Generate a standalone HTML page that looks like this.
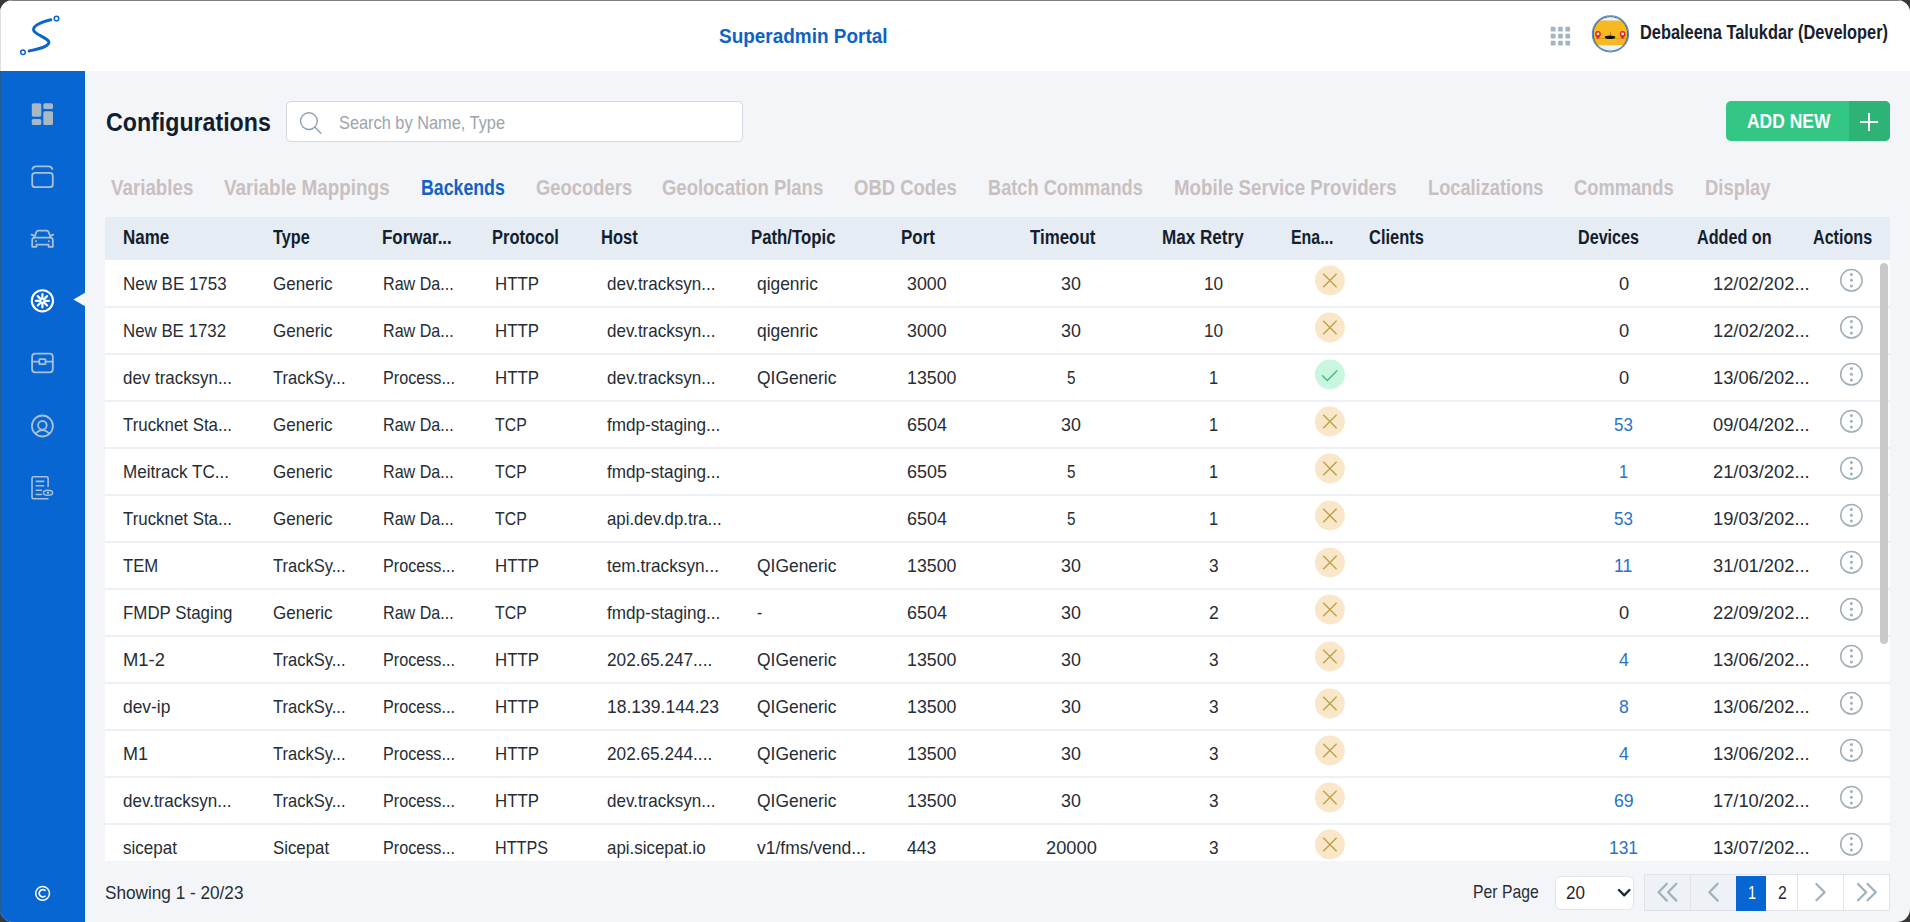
<!DOCTYPE html>
<html><head><meta charset="utf-8"><style>
html,body{margin:0;padding:0;width:1910px;height:922px;overflow:hidden;background:#383838}
#app{position:absolute;left:0;top:0;width:1910px;height:922px;border-radius:13px;overflow:hidden;background:#F4F5F9}
.t{position:absolute;white-space:nowrap;font-family:"Liberation Sans",sans-serif;transform-origin:0 0}
svg{overflow:visible}
</style></head><body><div id="app">
<div style="position:absolute;left:0px;top:0px;width:1910px;height:71px;background:#fff"></div>
<div style="position:absolute;left:0px;top:71px;width:85px;height:851px;background:#0766D1"></div>
<div style="position:absolute;left:0px;top:0px;width:1910px;height:1px;background:#808080"></div>
<div style="position:absolute;left:0px;top:1px;width:1px;height:70px;background:#DEDEDE"></div>
<div style="position:absolute;left:0px;top:71px;width:1px;height:851px;background:#225C94"></div>
<svg style="position:absolute;left:0px;top:0px;" width="80" height="70" viewBox="0 0 80 70"><g fill="none" stroke="#0A66CC" stroke-linecap="round">
<path d="M29.2 51 C38 49, 47 47.5, 48.8 43 C50.5 38.5, 34.5 35, 33.6 30 C32.8 24.5, 44 21.5, 50.8 19.8" stroke-width="3"/>
<circle cx="56.5" cy="18.6" r="2.3" stroke-width="1.5"/>
<circle cx="23" cy="52.2" r="2.3" stroke-width="1.5"/>
</g></svg>
<div class="t" style="left:718.50px;top:26.07px;font-size:20px;line-height:20px;font-weight:bold;color:#0C63C5;transform:scaleX(0.9477);">Superadmin Portal</div>
<svg style="position:absolute;left:0px;top:0px;pointer-events:none" width="1910" height="71" viewBox="0 0 1910 71"><g fill="#A3B4C4"><rect x="1550.8" y="26.80" width="4.7" height="4.7" rx="0.6"/><rect x="1550.8" y="33.75" width="4.7" height="4.7" rx="0.6"/><rect x="1550.8" y="40.70" width="4.7" height="4.7" rx="0.6"/><rect x="1558.1" y="26.80" width="4.7" height="4.7" rx="0.6"/><rect x="1558.1" y="33.75" width="4.7" height="4.7" rx="0.6"/><rect x="1558.1" y="40.70" width="4.7" height="4.7" rx="0.6"/><rect x="1565.4" y="26.80" width="4.7" height="4.7" rx="0.6"/><rect x="1565.4" y="33.75" width="4.7" height="4.7" rx="0.6"/><rect x="1565.4" y="40.70" width="4.7" height="4.7" rx="0.6"/></g></svg>
<svg style="position:absolute;left:1588px;top:11px;" width="45" height="45" viewBox="0 0 45 45"><defs><clipPath id="av"><circle cx="22.45" cy="22.9" r="17.6"/></clipPath></defs>
<circle cx="22.45" cy="22.9" r="17.6" fill="#E6F2FC"/>
<g clip-path="url(#av)">
<rect x="0" y="9.5" width="45" height="24.7" fill="#F8B822"/>
<rect x="0" y="26.9" width="45" height="1" fill="#D89B18"/>
<ellipse cx="22" cy="26.2" rx="5.3" ry="1.8" fill="#111"/>
<rect x="22" y="21" width="0.7" height="3.5" fill="#8a6a20"/>
<path d="M10 28.2 C8.3 25.8 7.1 24.6 7.1 22.9 A2.9 2.9 0 0 1 12.9 22.9 C12.9 24.6 11.7 25.8 10 28.2Z" fill="#E3261F"/>
<circle cx="10" cy="22.9" r="1.4" fill="#fff"/>
<path d="M34.65 28.2 C32.95 25.8 31.75 24.6 31.75 22.9 A2.9 2.9 0 0 1 37.55 22.9 C37.55 24.6 36.35 25.8 34.65 28.2Z" fill="#E3261F"/>
<circle cx="34.65" cy="22.9" r="1.4" fill="#fff"/>
</g>
<circle cx="22.45" cy="22.9" r="17.3" fill="none" stroke="#3F4A55" stroke-width="0.9"/>
<circle cx="22.45" cy="22.9" r="18.1" fill="none" stroke="#4F8FDA" stroke-width="1.1"/></svg>
<div class="t" style="left:1640.00px;top:23.49px;font-size:19.5px;line-height:19.5px;font-weight:bold;color:#16202F;transform:scaleX(0.8393);">Debaleena Talukdar (Developer)</div>
<svg style="position:absolute;left:0px;top:71px;" width="85" height="851" viewBox="0 0 85 851">
<g fill="#A8B8C5">
<rect x="31.8" y="32.2" width="9.5" height="13.5" rx="1.6"/>
<rect x="43.3" y="32.2" width="9.7" height="5.8" rx="1.6"/>
<rect x="31.8" y="47.9" width="9.5" height="6.1" rx="1.6"/>
<rect x="43.3" y="40.3" width="9.7" height="13.7" rx="1.6"/>
</g>
<g fill="none" stroke="#A9C0D8" stroke-width="1.8" stroke-linecap="round" stroke-linejoin="round">
<path d="M32.4 98 Q33 95.3 36 95.3 H48.6 Q51.6 95.3 52.3 98"/>
<rect x="32.2" y="101.9" width="20.6" height="14.3" rx="3"/>
<path d="M32.2 175.8 V169 Q32.2 166.8 34.2 166.6 L36.6 160.6 Q37.2 159.6 38.4 159.6 H46.6 Q47.8 159.6 48.4 160.6 L50.8 166.6 Q52.8 166.8 52.8 169 V175.8 H48.6 V173.6 H36.4 V175.8 Z"/>
<path d="M34.2 166.6 H50.8 M31.6 163.6 L33.8 164.6 M53.2 163.6 L51 164.6"/>
<rect x="32.1" y="282.7" width="20.7" height="18.6" rx="3"/>
<path d="M32.1 290.7 H39.2 M45.6 290.7 H52.8"/>
<rect x="39.3" y="288.2" width="6.2" height="5" rx="0.6"/>
<circle cx="42.4" cy="355" r="10.5"/>
<circle cx="42.4" cy="354.3" r="4.3"/>
<path d="M35.6 362.3 Q42.4 355.8 49.3 362.3"/>
</g>
<g fill="#A9C0D8"><circle cx="36" cy="170.2" r="1"/><circle cx="48.8" cy="170.2" r="1"/></g>
<g fill="none" stroke="#A9C0D8" stroke-width="1.6" stroke-linecap="round">
<path d="M48.1 415.5 V407.3 Q48.1 405.8 46.6 405.8 H33.5 Q32 405.8 32 407.3 V426.2 Q32 427.7 33.5 427.7 H48"/>
<path d="M36.3 410.4 H43.7 M36.3 414.8 H43.7 M36.3 419.3 H41.4 M36.3 423.5 H41.4"/>
<ellipse cx="48" cy="421.7" rx="4.6" ry="2.5" stroke-width="1.4"/>
</g>
<circle cx="48" cy="421.7" r="1.2" fill="#A9C0D8"/>
<g stroke="#fff" fill="none">
<circle cx="42.4" cy="229.8" r="10.6" stroke-width="2.1"/>
</g>
<g stroke="#fff" stroke-width="2.2" stroke-linecap="round">
<line x1="44.80" y1="229.80" x2="49.00" y2="229.80"/><line x1="44.10" y1="231.50" x2="47.07" y2="234.47"/><line x1="42.40" y1="232.20" x2="42.40" y2="236.40"/><line x1="40.70" y1="231.50" x2="37.73" y2="234.47"/><line x1="40.00" y1="229.80" x2="35.80" y2="229.80"/><line x1="40.70" y1="228.10" x2="37.73" y2="225.13"/><line x1="42.40" y1="227.40" x2="42.40" y2="223.20"/><line x1="44.10" y1="228.10" x2="47.07" y2="225.13"/>
</g>
<circle cx="42.4" cy="229.8" r="2.6" fill="#fff"/><circle cx="42.4" cy="229.8" r="1.0" fill="#0766D1"/>
<polygon points="73.4,228.5 85.5,221.4 85.5,235.6" fill="#F4F5F9"/>
<g fill="none" stroke="#fff" stroke-width="1.5">
<circle cx="42.6" cy="822.3" r="6.9"/>
<path d="M45.6 819.8 A3.7 3.7 0 1 0 45.6 824.8" stroke-width="1.7"/>
</g>
</svg>
<div class="t" style="left:105.80px;top:109.81px;font-size:25.5px;line-height:25.5px;font-weight:bold;color:#121D2D;transform:scaleX(0.9090);">Configurations</div>
<div style="position:absolute;left:286px;top:101px;width:457px;height:41px;background:#fff;border:1px solid #CFD8E1;border-radius:5px;box-sizing:border-box"></div>
<svg style="position:absolute;left:280px;top:95px;" width="60" height="50" viewBox="0 0 60 50"><g fill="none" stroke="#8FA3AE" stroke-width="1.4" stroke-linecap="round"><circle cx="28.9" cy="26.1" r="8.4"/><path d="M35 32.3 L40.8 38.3"/></g></svg>
<div class="t" style="left:339.00px;top:113.64px;font-size:18.5px;line-height:18.5px;color:#9BA4AD;transform:scaleX(0.8837);">Search by Name, Type</div>
<div style="position:absolute;left:1726px;top:101px;width:164px;height:40px;background:#33C684;border-radius:5px"></div>
<div style="position:absolute;left:1849px;top:101px;width:41px;height:40px;background:#2DB376;border-radius:0 5px 5px 0"></div>
<div class="t" style="left:1746.90px;top:111.89px;font-size:19.5px;line-height:19.5px;font-weight:bold;color:#FFFFFF;transform:scaleX(0.8953);">ADD NEW</div>
<div style="position:absolute;left:1860px;top:121px;width:18px;height:2px;background:#fff"></div>
<div style="position:absolute;left:1868px;top:113px;width:2px;height:18px;background:#fff"></div>
<div class="t" style="left:110.60px;top:176.98px;font-size:22px;line-height:22px;font-weight:bold;color:#C8C0C0;transform:scaleX(0.8526);">Variables</div>
<div class="t" style="left:224.30px;top:176.98px;font-size:22px;line-height:22px;font-weight:bold;color:#C8C0C0;transform:scaleX(0.8574);">Variable Mappings</div>
<div class="t" style="left:421.40px;top:176.98px;font-size:22px;line-height:22px;font-weight:bold;color:#1162C4;transform:scaleX(0.8062);">Backends</div>
<div class="t" style="left:535.70px;top:176.98px;font-size:22px;line-height:22px;font-weight:bold;color:#C8C0C0;transform:scaleX(0.8369);">Geocoders</div>
<div class="t" style="left:662.30px;top:176.98px;font-size:22px;line-height:22px;font-weight:bold;color:#C8C0C0;transform:scaleX(0.8398);">Geolocation Plans</div>
<div class="t" style="left:854.00px;top:176.98px;font-size:22px;line-height:22px;font-weight:bold;color:#C8C0C0;transform:scaleX(0.8401);">OBD Codes</div>
<div class="t" style="left:987.90px;top:176.98px;font-size:22px;line-height:22px;font-weight:bold;color:#C8C0C0;transform:scaleX(0.8276);">Batch Commands</div>
<div class="t" style="left:1174.20px;top:176.98px;font-size:22px;line-height:22px;font-weight:bold;color:#C8C0C0;transform:scaleX(0.8511);">Mobile Service Providers</div>
<div class="t" style="left:1428.00px;top:176.98px;font-size:22px;line-height:22px;font-weight:bold;color:#C8C0C0;transform:scaleX(0.8281);">Localizations</div>
<div class="t" style="left:1574.10px;top:176.98px;font-size:22px;line-height:22px;font-weight:bold;color:#C8C0C0;transform:scaleX(0.8314);">Commands</div>
<div class="t" style="left:1705.00px;top:176.98px;font-size:22px;line-height:22px;font-weight:bold;color:#C8C0C0;transform:scaleX(0.8383);">Display</div>
<div style="position:absolute;left:105px;top:217px;width:1785px;height:43px;background:#E5ECF4"></div>
<div style="position:absolute;left:105px;top:260px;width:1785px;height:601px;background:#fff"></div>
<div style="position:absolute;left:105px;top:306px;width:1785px;height:2px;background:#EDF0F5"></div>
<div style="position:absolute;left:105px;top:353px;width:1785px;height:2px;background:#EDF0F5"></div>
<div style="position:absolute;left:105px;top:400px;width:1785px;height:2px;background:#EDF0F5"></div>
<div style="position:absolute;left:105px;top:447px;width:1785px;height:2px;background:#EDF0F5"></div>
<div style="position:absolute;left:105px;top:494px;width:1785px;height:2px;background:#EDF0F5"></div>
<div style="position:absolute;left:105px;top:541px;width:1785px;height:2px;background:#EDF0F5"></div>
<div style="position:absolute;left:105px;top:588px;width:1785px;height:2px;background:#EDF0F5"></div>
<div style="position:absolute;left:105px;top:635px;width:1785px;height:2px;background:#EDF0F5"></div>
<div style="position:absolute;left:105px;top:682px;width:1785px;height:2px;background:#EDF0F5"></div>
<div style="position:absolute;left:105px;top:729px;width:1785px;height:2px;background:#EDF0F5"></div>
<div style="position:absolute;left:105px;top:776px;width:1785px;height:2px;background:#EDF0F5"></div>
<div style="position:absolute;left:105px;top:823px;width:1785px;height:2px;background:#EDF0F5"></div>
<div class="t" style="left:122.90px;top:227.07px;font-size:20px;line-height:20px;font-weight:bold;color:#141E2E;transform:scaleX(0.8485);">Name</div>
<div class="t" style="left:272.80px;top:227.07px;font-size:20px;line-height:20px;font-weight:bold;color:#141E2E;transform:scaleX(0.8119);">Type</div>
<div class="t" style="left:382.10px;top:227.07px;font-size:20px;line-height:20px;font-weight:bold;color:#141E2E;transform:scaleX(0.8486);">Forwar...</div>
<div class="t" style="left:491.80px;top:227.07px;font-size:20px;line-height:20px;font-weight:bold;color:#141E2E;transform:scaleX(0.8249);">Protocol</div>
<div class="t" style="left:601.10px;top:227.07px;font-size:20px;line-height:20px;font-weight:bold;color:#141E2E;transform:scaleX(0.8279);">Host</div>
<div class="t" style="left:751.20px;top:227.07px;font-size:20px;line-height:20px;font-weight:bold;color:#141E2E;transform:scaleX(0.8387);">Path/Topic</div>
<div class="t" style="left:901.00px;top:227.07px;font-size:20px;line-height:20px;font-weight:bold;color:#141E2E;transform:scaleX(0.8500);">Port</div>
<div class="t" style="left:1029.90px;top:227.07px;font-size:20px;line-height:20px;font-weight:bold;color:#141E2E;transform:scaleX(0.8437);">Timeout</div>
<div class="t" style="left:1161.80px;top:227.07px;font-size:20px;line-height:20px;font-weight:bold;color:#141E2E;transform:scaleX(0.8546);">Max Retry</div>
<div class="t" style="left:1290.60px;top:227.07px;font-size:20px;line-height:20px;font-weight:bold;color:#141E2E;transform:scaleX(0.7948);">Ena...</div>
<div class="t" style="left:1369.20px;top:227.07px;font-size:20px;line-height:20px;font-weight:bold;color:#141E2E;transform:scaleX(0.8231);">Clients</div>
<div class="t" style="left:1578.40px;top:227.07px;font-size:20px;line-height:20px;font-weight:bold;color:#141E2E;transform:scaleX(0.8069);">Devices</div>
<div class="t" style="left:1696.80px;top:227.07px;font-size:20px;line-height:20px;font-weight:bold;color:#141E2E;transform:scaleX(0.8080);">Added on</div>
<div class="t" style="left:1813.10px;top:227.07px;font-size:20px;line-height:20px;font-weight:bold;color:#141E2E;transform:scaleX(0.8057);">Actions</div>
<div class="t" style="left:122.80px;top:274.94px;font-size:18.5px;line-height:18.5px;color:#262D35;transform:scaleX(0.9160);">New BE 1753</div>
<div class="t" style="left:273.10px;top:274.94px;font-size:18.5px;line-height:18.5px;color:#262D35;transform:scaleX(0.9198);">Generic</div>
<div class="t" style="left:383.30px;top:274.94px;font-size:18.5px;line-height:18.5px;color:#262D35;transform:scaleX(0.8707);">Raw Da...</div>
<div class="t" style="left:494.80px;top:274.94px;font-size:18.5px;line-height:18.5px;color:#262D35;transform:scaleX(0.9110);">HTTP</div>
<div class="t" style="left:606.50px;top:274.94px;font-size:18.5px;line-height:18.5px;color:#262D35;transform:scaleX(0.9194);">dev.tracksyn...</div>
<div class="t" style="left:757.00px;top:274.94px;font-size:18.5px;line-height:18.5px;color:#262D35;transform:scaleX(0.9398);">qigenric</div>
<div class="t" style="left:907.20px;top:274.94px;font-size:18.5px;line-height:18.5px;color:#262D35;transform:scaleX(0.9623);">3000</div>
<div class="t" style="left:1061.35px;top:274.94px;font-size:18.5px;line-height:18.5px;color:#262D35;transform:scaleX(0.9660);">30</div>
<div class="t" style="left:1204.40px;top:274.94px;font-size:18.5px;line-height:18.5px;color:#262D35;transform:scaleX(0.9320);">10</div>
<div class="t" style="left:1618.50px;top:274.94px;font-size:18.5px;line-height:18.5px;color:#262D35;transform:scaleX(0.9903);">0</div>
<div class="t" style="left:1712.50px;top:274.94px;font-size:18.5px;line-height:18.5px;color:#262D35;transform:scaleX(0.9890);">12/02/202...</div>
<div class="t" style="left:122.80px;top:321.94px;font-size:18.5px;line-height:18.5px;color:#262D35;transform:scaleX(0.9107);">New BE 1732</div>
<div class="t" style="left:273.10px;top:321.94px;font-size:18.5px;line-height:18.5px;color:#262D35;transform:scaleX(0.9198);">Generic</div>
<div class="t" style="left:383.30px;top:321.94px;font-size:18.5px;line-height:18.5px;color:#262D35;transform:scaleX(0.8707);">Raw Da...</div>
<div class="t" style="left:494.80px;top:321.94px;font-size:18.5px;line-height:18.5px;color:#262D35;transform:scaleX(0.9110);">HTTP</div>
<div class="t" style="left:606.50px;top:321.94px;font-size:18.5px;line-height:18.5px;color:#262D35;transform:scaleX(0.9194);">dev.tracksyn...</div>
<div class="t" style="left:757.00px;top:321.94px;font-size:18.5px;line-height:18.5px;color:#262D35;transform:scaleX(0.9398);">qigenric</div>
<div class="t" style="left:907.20px;top:321.94px;font-size:18.5px;line-height:18.5px;color:#262D35;transform:scaleX(0.9623);">3000</div>
<div class="t" style="left:1061.35px;top:321.94px;font-size:18.5px;line-height:18.5px;color:#262D35;transform:scaleX(0.9660);">30</div>
<div class="t" style="left:1204.40px;top:321.94px;font-size:18.5px;line-height:18.5px;color:#262D35;transform:scaleX(0.9320);">10</div>
<div class="t" style="left:1618.50px;top:321.94px;font-size:18.5px;line-height:18.5px;color:#262D35;transform:scaleX(0.9903);">0</div>
<div class="t" style="left:1712.50px;top:321.94px;font-size:18.5px;line-height:18.5px;color:#262D35;transform:scaleX(0.9890);">12/02/202...</div>
<div class="t" style="left:122.80px;top:368.94px;font-size:18.5px;line-height:18.5px;color:#262D35;transform:scaleX(0.9140);">dev tracksyn...</div>
<div class="t" style="left:273.10px;top:368.94px;font-size:18.5px;line-height:18.5px;color:#262D35;transform:scaleX(0.8929);">TrackSy...</div>
<div class="t" style="left:383.30px;top:368.94px;font-size:18.5px;line-height:18.5px;color:#262D35;transform:scaleX(0.8742);">Process...</div>
<div class="t" style="left:494.80px;top:368.94px;font-size:18.5px;line-height:18.5px;color:#262D35;transform:scaleX(0.9110);">HTTP</div>
<div class="t" style="left:606.50px;top:368.94px;font-size:18.5px;line-height:18.5px;color:#262D35;transform:scaleX(0.9194);">dev.tracksyn...</div>
<div class="t" style="left:757.00px;top:368.94px;font-size:18.5px;line-height:18.5px;color:#262D35;transform:scaleX(0.9419);">QIGeneric</div>
<div class="t" style="left:907.20px;top:368.94px;font-size:18.5px;line-height:18.5px;color:#262D35;transform:scaleX(0.9602);">13500</div>
<div class="t" style="left:1067.05px;top:368.94px;font-size:18.5px;line-height:18.5px;color:#262D35;transform:scaleX(0.8252);">5</div>
<div class="t" style="left:1209.45px;top:368.94px;font-size:18.5px;line-height:18.5px;color:#262D35;transform:scaleX(0.8835);">1</div>
<div class="t" style="left:1618.50px;top:368.94px;font-size:18.5px;line-height:18.5px;color:#262D35;transform:scaleX(0.9903);">0</div>
<div class="t" style="left:1712.50px;top:368.94px;font-size:18.5px;line-height:18.5px;color:#262D35;transform:scaleX(0.9890);">13/06/202...</div>
<div class="t" style="left:122.80px;top:415.94px;font-size:18.5px;line-height:18.5px;color:#262D35;transform:scaleX(0.9114);">Trucknet Sta...</div>
<div class="t" style="left:273.10px;top:415.94px;font-size:18.5px;line-height:18.5px;color:#262D35;transform:scaleX(0.9198);">Generic</div>
<div class="t" style="left:383.30px;top:415.94px;font-size:18.5px;line-height:18.5px;color:#262D35;transform:scaleX(0.8707);">Raw Da...</div>
<div class="t" style="left:494.80px;top:415.94px;font-size:18.5px;line-height:18.5px;color:#262D35;transform:scaleX(0.8568);">TCP</div>
<div class="t" style="left:606.50px;top:415.94px;font-size:18.5px;line-height:18.5px;color:#262D35;transform:scaleX(0.9260);">fmdp-staging...</div>
<div class="t" style="left:907.20px;top:415.94px;font-size:18.5px;line-height:18.5px;color:#262D35;transform:scaleX(0.9696);">6504</div>
<div class="t" style="left:1061.35px;top:415.94px;font-size:18.5px;line-height:18.5px;color:#262D35;transform:scaleX(0.9660);">30</div>
<div class="t" style="left:1209.45px;top:415.94px;font-size:18.5px;line-height:18.5px;color:#262D35;transform:scaleX(0.8835);">1</div>
<div class="t" style="left:1614.15px;top:415.94px;font-size:18.5px;line-height:18.5px;color:#2A72C6;transform:scaleX(0.9175);">53</div>
<div class="t" style="left:1712.50px;top:415.94px;font-size:18.5px;line-height:18.5px;color:#262D35;transform:scaleX(0.9890);">09/04/202...</div>
<div class="t" style="left:122.80px;top:462.94px;font-size:18.5px;line-height:18.5px;color:#262D35;transform:scaleX(0.9233);">Meitrack TC...</div>
<div class="t" style="left:273.10px;top:462.94px;font-size:18.5px;line-height:18.5px;color:#262D35;transform:scaleX(0.9198);">Generic</div>
<div class="t" style="left:383.30px;top:462.94px;font-size:18.5px;line-height:18.5px;color:#262D35;transform:scaleX(0.8707);">Raw Da...</div>
<div class="t" style="left:494.80px;top:462.94px;font-size:18.5px;line-height:18.5px;color:#262D35;transform:scaleX(0.8568);">TCP</div>
<div class="t" style="left:606.50px;top:462.94px;font-size:18.5px;line-height:18.5px;color:#262D35;transform:scaleX(0.9260);">fmdp-staging...</div>
<div class="t" style="left:907.20px;top:462.94px;font-size:18.5px;line-height:18.5px;color:#262D35;transform:scaleX(0.9696);">6505</div>
<div class="t" style="left:1067.05px;top:462.94px;font-size:18.5px;line-height:18.5px;color:#262D35;transform:scaleX(0.8252);">5</div>
<div class="t" style="left:1209.45px;top:462.94px;font-size:18.5px;line-height:18.5px;color:#262D35;transform:scaleX(0.8835);">1</div>
<div class="t" style="left:1619.05px;top:462.94px;font-size:18.5px;line-height:18.5px;color:#2A72C6;transform:scaleX(0.8835);">1</div>
<div class="t" style="left:1712.50px;top:462.94px;font-size:18.5px;line-height:18.5px;color:#262D35;transform:scaleX(0.9890);">21/03/202...</div>
<div class="t" style="left:122.80px;top:509.94px;font-size:18.5px;line-height:18.5px;color:#262D35;transform:scaleX(0.9114);">Trucknet Sta...</div>
<div class="t" style="left:273.10px;top:509.94px;font-size:18.5px;line-height:18.5px;color:#262D35;transform:scaleX(0.9198);">Generic</div>
<div class="t" style="left:383.30px;top:509.94px;font-size:18.5px;line-height:18.5px;color:#262D35;transform:scaleX(0.8707);">Raw Da...</div>
<div class="t" style="left:494.80px;top:509.94px;font-size:18.5px;line-height:18.5px;color:#262D35;transform:scaleX(0.8568);">TCP</div>
<div class="t" style="left:606.50px;top:509.94px;font-size:18.5px;line-height:18.5px;color:#262D35;transform:scaleX(0.9084);">api.dev.dp.tra...</div>
<div class="t" style="left:907.20px;top:509.94px;font-size:18.5px;line-height:18.5px;color:#262D35;transform:scaleX(0.9696);">6504</div>
<div class="t" style="left:1067.05px;top:509.94px;font-size:18.5px;line-height:18.5px;color:#262D35;transform:scaleX(0.8252);">5</div>
<div class="t" style="left:1209.45px;top:509.94px;font-size:18.5px;line-height:18.5px;color:#262D35;transform:scaleX(0.8835);">1</div>
<div class="t" style="left:1614.15px;top:509.94px;font-size:18.5px;line-height:18.5px;color:#2A72C6;transform:scaleX(0.9175);">53</div>
<div class="t" style="left:1712.50px;top:509.94px;font-size:18.5px;line-height:18.5px;color:#262D35;transform:scaleX(0.9890);">19/03/202...</div>
<div class="t" style="left:122.80px;top:556.94px;font-size:18.5px;line-height:18.5px;color:#262D35;transform:scaleX(0.9014);">TEM</div>
<div class="t" style="left:273.10px;top:556.94px;font-size:18.5px;line-height:18.5px;color:#262D35;transform:scaleX(0.8929);">TrackSy...</div>
<div class="t" style="left:383.30px;top:556.94px;font-size:18.5px;line-height:18.5px;color:#262D35;transform:scaleX(0.8742);">Process...</div>
<div class="t" style="left:494.80px;top:556.94px;font-size:18.5px;line-height:18.5px;color:#262D35;transform:scaleX(0.9110);">HTTP</div>
<div class="t" style="left:606.50px;top:556.94px;font-size:18.5px;line-height:18.5px;color:#262D35;transform:scaleX(0.9310);">tem.tracksyn...</div>
<div class="t" style="left:757.00px;top:556.94px;font-size:18.5px;line-height:18.5px;color:#262D35;transform:scaleX(0.9419);">QIGeneric</div>
<div class="t" style="left:907.20px;top:556.94px;font-size:18.5px;line-height:18.5px;color:#262D35;transform:scaleX(0.9602);">13500</div>
<div class="t" style="left:1061.35px;top:556.94px;font-size:18.5px;line-height:18.5px;color:#262D35;transform:scaleX(0.9660);">30</div>
<div class="t" style="left:1209.20px;top:556.94px;font-size:18.5px;line-height:18.5px;color:#262D35;transform:scaleX(0.9320);">3</div>
<div class="t" style="left:1614.43px;top:556.94px;font-size:18.5px;line-height:18.5px;color:#2A72C6;transform:scaleX(0.9550);">11</div>
<div class="t" style="left:1712.50px;top:556.94px;font-size:18.5px;line-height:18.5px;color:#262D35;transform:scaleX(0.9890);">31/01/202...</div>
<div class="t" style="left:122.80px;top:603.94px;font-size:18.5px;line-height:18.5px;color:#262D35;transform:scaleX(0.9129);">FMDP Staging</div>
<div class="t" style="left:273.10px;top:603.94px;font-size:18.5px;line-height:18.5px;color:#262D35;transform:scaleX(0.9198);">Generic</div>
<div class="t" style="left:383.30px;top:603.94px;font-size:18.5px;line-height:18.5px;color:#262D35;transform:scaleX(0.8707);">Raw Da...</div>
<div class="t" style="left:494.80px;top:603.94px;font-size:18.5px;line-height:18.5px;color:#262D35;transform:scaleX(0.8568);">TCP</div>
<div class="t" style="left:606.50px;top:603.94px;font-size:18.5px;line-height:18.5px;color:#262D35;transform:scaleX(0.9260);">fmdp-staging...</div>
<div class="t" style="left:757.00px;top:603.94px;font-size:18.5px;line-height:18.5px;color:#262D35;transform:scaleX(0.8455);">-</div>
<div class="t" style="left:907.20px;top:603.94px;font-size:18.5px;line-height:18.5px;color:#262D35;transform:scaleX(0.9696);">6504</div>
<div class="t" style="left:1061.35px;top:603.94px;font-size:18.5px;line-height:18.5px;color:#262D35;transform:scaleX(0.9660);">30</div>
<div class="t" style="left:1209.08px;top:603.94px;font-size:18.5px;line-height:18.5px;color:#262D35;transform:scaleX(0.9550);">2</div>
<div class="t" style="left:1618.50px;top:603.94px;font-size:18.5px;line-height:18.5px;color:#262D35;transform:scaleX(0.9903);">0</div>
<div class="t" style="left:1712.50px;top:603.94px;font-size:18.5px;line-height:18.5px;color:#262D35;transform:scaleX(0.9890);">22/09/202...</div>
<div class="t" style="left:122.80px;top:650.94px;font-size:18.5px;line-height:18.5px;color:#262D35;transform:scaleX(0.9941);">M1-2</div>
<div class="t" style="left:273.10px;top:650.94px;font-size:18.5px;line-height:18.5px;color:#262D35;transform:scaleX(0.8929);">TrackSy...</div>
<div class="t" style="left:383.30px;top:650.94px;font-size:18.5px;line-height:18.5px;color:#262D35;transform:scaleX(0.8742);">Process...</div>
<div class="t" style="left:494.80px;top:650.94px;font-size:18.5px;line-height:18.5px;color:#262D35;transform:scaleX(0.9110);">HTTP</div>
<div class="t" style="left:606.50px;top:650.94px;font-size:18.5px;line-height:18.5px;color:#262D35;transform:scaleX(0.9297);">202.65.247....</div>
<div class="t" style="left:757.00px;top:650.94px;font-size:18.5px;line-height:18.5px;color:#262D35;transform:scaleX(0.9419);">QIGeneric</div>
<div class="t" style="left:907.20px;top:650.94px;font-size:18.5px;line-height:18.5px;color:#262D35;transform:scaleX(0.9602);">13500</div>
<div class="t" style="left:1061.35px;top:650.94px;font-size:18.5px;line-height:18.5px;color:#262D35;transform:scaleX(0.9660);">30</div>
<div class="t" style="left:1209.20px;top:650.94px;font-size:18.5px;line-height:18.5px;color:#262D35;transform:scaleX(0.9320);">3</div>
<div class="t" style="left:1618.68px;top:650.94px;font-size:18.5px;line-height:18.5px;color:#2A72C6;transform:scaleX(0.9550);">4</div>
<div class="t" style="left:1712.50px;top:650.94px;font-size:18.5px;line-height:18.5px;color:#262D35;transform:scaleX(0.9890);">13/06/202...</div>
<div class="t" style="left:122.80px;top:697.94px;font-size:18.5px;line-height:18.5px;color:#262D35;transform:scaleX(0.9405);">dev-ip</div>
<div class="t" style="left:273.10px;top:697.94px;font-size:18.5px;line-height:18.5px;color:#262D35;transform:scaleX(0.8929);">TrackSy...</div>
<div class="t" style="left:383.30px;top:697.94px;font-size:18.5px;line-height:18.5px;color:#262D35;transform:scaleX(0.8742);">Process...</div>
<div class="t" style="left:494.80px;top:697.94px;font-size:18.5px;line-height:18.5px;color:#262D35;transform:scaleX(0.9110);">HTTP</div>
<div class="t" style="left:606.50px;top:697.94px;font-size:18.5px;line-height:18.5px;color:#262D35;transform:scaleX(0.9476);">18.139.144.23</div>
<div class="t" style="left:757.00px;top:697.94px;font-size:18.5px;line-height:18.5px;color:#262D35;transform:scaleX(0.9419);">QIGeneric</div>
<div class="t" style="left:907.20px;top:697.94px;font-size:18.5px;line-height:18.5px;color:#262D35;transform:scaleX(0.9602);">13500</div>
<div class="t" style="left:1061.35px;top:697.94px;font-size:18.5px;line-height:18.5px;color:#262D35;transform:scaleX(0.9660);">30</div>
<div class="t" style="left:1209.20px;top:697.94px;font-size:18.5px;line-height:18.5px;color:#262D35;transform:scaleX(0.9320);">3</div>
<div class="t" style="left:1618.68px;top:697.94px;font-size:18.5px;line-height:18.5px;color:#2A72C6;transform:scaleX(0.9550);">8</div>
<div class="t" style="left:1712.50px;top:697.94px;font-size:18.5px;line-height:18.5px;color:#262D35;transform:scaleX(0.9890);">13/06/202...</div>
<div class="t" style="left:122.80px;top:744.94px;font-size:18.5px;line-height:18.5px;color:#262D35;transform:scaleX(0.9728);">M1</div>
<div class="t" style="left:273.10px;top:744.94px;font-size:18.5px;line-height:18.5px;color:#262D35;transform:scaleX(0.8929);">TrackSy...</div>
<div class="t" style="left:383.30px;top:744.94px;font-size:18.5px;line-height:18.5px;color:#262D35;transform:scaleX(0.8742);">Process...</div>
<div class="t" style="left:494.80px;top:744.94px;font-size:18.5px;line-height:18.5px;color:#262D35;transform:scaleX(0.9110);">HTTP</div>
<div class="t" style="left:606.50px;top:744.94px;font-size:18.5px;line-height:18.5px;color:#262D35;transform:scaleX(0.9297);">202.65.244....</div>
<div class="t" style="left:757.00px;top:744.94px;font-size:18.5px;line-height:18.5px;color:#262D35;transform:scaleX(0.9419);">QIGeneric</div>
<div class="t" style="left:907.20px;top:744.94px;font-size:18.5px;line-height:18.5px;color:#262D35;transform:scaleX(0.9602);">13500</div>
<div class="t" style="left:1061.35px;top:744.94px;font-size:18.5px;line-height:18.5px;color:#262D35;transform:scaleX(0.9660);">30</div>
<div class="t" style="left:1209.20px;top:744.94px;font-size:18.5px;line-height:18.5px;color:#262D35;transform:scaleX(0.9320);">3</div>
<div class="t" style="left:1618.68px;top:744.94px;font-size:18.5px;line-height:18.5px;color:#2A72C6;transform:scaleX(0.9550);">4</div>
<div class="t" style="left:1712.50px;top:744.94px;font-size:18.5px;line-height:18.5px;color:#262D35;transform:scaleX(0.9890);">13/06/202...</div>
<div class="t" style="left:122.80px;top:791.94px;font-size:18.5px;line-height:18.5px;color:#262D35;transform:scaleX(0.9194);">dev.tracksyn...</div>
<div class="t" style="left:273.10px;top:791.94px;font-size:18.5px;line-height:18.5px;color:#262D35;transform:scaleX(0.8929);">TrackSy...</div>
<div class="t" style="left:383.30px;top:791.94px;font-size:18.5px;line-height:18.5px;color:#262D35;transform:scaleX(0.8742);">Process...</div>
<div class="t" style="left:494.80px;top:791.94px;font-size:18.5px;line-height:18.5px;color:#262D35;transform:scaleX(0.9110);">HTTP</div>
<div class="t" style="left:606.50px;top:791.94px;font-size:18.5px;line-height:18.5px;color:#262D35;transform:scaleX(0.9194);">dev.tracksyn...</div>
<div class="t" style="left:757.00px;top:791.94px;font-size:18.5px;line-height:18.5px;color:#262D35;transform:scaleX(0.9419);">QIGeneric</div>
<div class="t" style="left:907.20px;top:791.94px;font-size:18.5px;line-height:18.5px;color:#262D35;transform:scaleX(0.9602);">13500</div>
<div class="t" style="left:1061.35px;top:791.94px;font-size:18.5px;line-height:18.5px;color:#262D35;transform:scaleX(0.9660);">30</div>
<div class="t" style="left:1209.20px;top:791.94px;font-size:18.5px;line-height:18.5px;color:#262D35;transform:scaleX(0.9320);">3</div>
<div class="t" style="left:1613.76px;top:791.94px;font-size:18.5px;line-height:18.5px;color:#2A72C6;transform:scaleX(0.9550);">69</div>
<div class="t" style="left:1712.50px;top:791.94px;font-size:18.5px;line-height:18.5px;color:#262D35;transform:scaleX(0.9890);">17/10/202...</div>
<div class="t" style="left:122.80px;top:838.94px;font-size:18.5px;line-height:18.5px;color:#262D35;transform:scaleX(0.9198);">sicepat</div>
<div class="t" style="left:273.10px;top:838.94px;font-size:18.5px;line-height:18.5px;color:#262D35;transform:scaleX(0.9092);">Sicepat</div>
<div class="t" style="left:383.30px;top:838.94px;font-size:18.5px;line-height:18.5px;color:#262D35;transform:scaleX(0.8742);">Process...</div>
<div class="t" style="left:494.80px;top:838.94px;font-size:18.5px;line-height:18.5px;color:#262D35;transform:scaleX(0.8755);">HTTPS</div>
<div class="t" style="left:606.50px;top:838.94px;font-size:18.5px;line-height:18.5px;color:#262D35;transform:scaleX(0.9130);">api.sicepat.io</div>
<div class="t" style="left:757.00px;top:838.94px;font-size:18.5px;line-height:18.5px;color:#262D35;transform:scaleX(0.9449);">v1/fms/vend...</div>
<div class="t" style="left:907.20px;top:838.94px;font-size:18.5px;line-height:18.5px;color:#262D35;transform:scaleX(0.9498);">443</div>
<div class="t" style="left:1045.90px;top:838.94px;font-size:18.5px;line-height:18.5px;color:#262D35;transform:scaleX(0.9874);">20000</div>
<div class="t" style="left:1209.20px;top:838.94px;font-size:18.5px;line-height:18.5px;color:#262D35;transform:scaleX(0.9320);">3</div>
<div class="t" style="left:1609.10px;top:838.94px;font-size:18.5px;line-height:18.5px;color:#2A72C6;transform:scaleX(0.9400);">131</div>
<div class="t" style="left:1712.50px;top:838.94px;font-size:18.5px;line-height:18.5px;color:#262D35;transform:scaleX(0.9890);">13/07/202...</div>
<div style="position:absolute;left:0;top:260px;width:1910px;height:601px;overflow:hidden"><svg style="position:absolute;left:0;top:-260px" width="1910" height="922"><circle cx="1329.9" cy="280.5" r="15" fill="#FAE7CA"/><path d="M1323.2 273.8 L1336.6 287.2 M1336.6 273.8 L1323.2 287.2" fill="none" stroke="#BDA247" stroke-width="1.4"/><circle cx="1851.4" cy="280.3" r="10.7" fill="none" stroke="#9FB0BB" stroke-width="1.5"/><circle cx="1851.4" cy="274.5" r="1.5" fill="#9FB0BB"/><circle cx="1851.4" cy="280.3" r="1.5" fill="#9FB0BB"/><circle cx="1851.4" cy="286.1" r="1.5" fill="#9FB0BB"/><circle cx="1329.9" cy="327.5" r="15" fill="#FAE7CA"/><path d="M1323.2 320.8 L1336.6 334.2 M1336.6 320.8 L1323.2 334.2" fill="none" stroke="#BDA247" stroke-width="1.4"/><circle cx="1851.4" cy="327.3" r="10.7" fill="none" stroke="#9FB0BB" stroke-width="1.5"/><circle cx="1851.4" cy="321.5" r="1.5" fill="#9FB0BB"/><circle cx="1851.4" cy="327.3" r="1.5" fill="#9FB0BB"/><circle cx="1851.4" cy="333.1" r="1.5" fill="#9FB0BB"/><circle cx="1329.9" cy="374.5" r="15" fill="#C9F6DF"/><path d="M1322.6 375.7 L1327.3 380.5 L1337 370.7" fill="none" stroke="#3DBD7D" stroke-width="1.4" stroke-linecap="round" stroke-linejoin="round"/><circle cx="1851.4" cy="374.3" r="10.7" fill="none" stroke="#9FB0BB" stroke-width="1.5"/><circle cx="1851.4" cy="368.5" r="1.5" fill="#9FB0BB"/><circle cx="1851.4" cy="374.3" r="1.5" fill="#9FB0BB"/><circle cx="1851.4" cy="380.1" r="1.5" fill="#9FB0BB"/><circle cx="1329.9" cy="421.5" r="15" fill="#FAE7CA"/><path d="M1323.2 414.8 L1336.6 428.2 M1336.6 414.8 L1323.2 428.2" fill="none" stroke="#BDA247" stroke-width="1.4"/><circle cx="1851.4" cy="421.3" r="10.7" fill="none" stroke="#9FB0BB" stroke-width="1.5"/><circle cx="1851.4" cy="415.5" r="1.5" fill="#9FB0BB"/><circle cx="1851.4" cy="421.3" r="1.5" fill="#9FB0BB"/><circle cx="1851.4" cy="427.1" r="1.5" fill="#9FB0BB"/><circle cx="1329.9" cy="468.5" r="15" fill="#FAE7CA"/><path d="M1323.2 461.8 L1336.6 475.2 M1336.6 461.8 L1323.2 475.2" fill="none" stroke="#BDA247" stroke-width="1.4"/><circle cx="1851.4" cy="468.3" r="10.7" fill="none" stroke="#9FB0BB" stroke-width="1.5"/><circle cx="1851.4" cy="462.5" r="1.5" fill="#9FB0BB"/><circle cx="1851.4" cy="468.3" r="1.5" fill="#9FB0BB"/><circle cx="1851.4" cy="474.1" r="1.5" fill="#9FB0BB"/><circle cx="1329.9" cy="515.5" r="15" fill="#FAE7CA"/><path d="M1323.2 508.8 L1336.6 522.2 M1336.6 508.8 L1323.2 522.2" fill="none" stroke="#BDA247" stroke-width="1.4"/><circle cx="1851.4" cy="515.3" r="10.7" fill="none" stroke="#9FB0BB" stroke-width="1.5"/><circle cx="1851.4" cy="509.5" r="1.5" fill="#9FB0BB"/><circle cx="1851.4" cy="515.3" r="1.5" fill="#9FB0BB"/><circle cx="1851.4" cy="521.1" r="1.5" fill="#9FB0BB"/><circle cx="1329.9" cy="562.5" r="15" fill="#FAE7CA"/><path d="M1323.2 555.8 L1336.6 569.2 M1336.6 555.8 L1323.2 569.2" fill="none" stroke="#BDA247" stroke-width="1.4"/><circle cx="1851.4" cy="562.3" r="10.7" fill="none" stroke="#9FB0BB" stroke-width="1.5"/><circle cx="1851.4" cy="556.5" r="1.5" fill="#9FB0BB"/><circle cx="1851.4" cy="562.3" r="1.5" fill="#9FB0BB"/><circle cx="1851.4" cy="568.1" r="1.5" fill="#9FB0BB"/><circle cx="1329.9" cy="609.5" r="15" fill="#FAE7CA"/><path d="M1323.2 602.8 L1336.6 616.2 M1336.6 602.8 L1323.2 616.2" fill="none" stroke="#BDA247" stroke-width="1.4"/><circle cx="1851.4" cy="609.3" r="10.7" fill="none" stroke="#9FB0BB" stroke-width="1.5"/><circle cx="1851.4" cy="603.5" r="1.5" fill="#9FB0BB"/><circle cx="1851.4" cy="609.3" r="1.5" fill="#9FB0BB"/><circle cx="1851.4" cy="615.1" r="1.5" fill="#9FB0BB"/><circle cx="1329.9" cy="656.5" r="15" fill="#FAE7CA"/><path d="M1323.2 649.8 L1336.6 663.2 M1336.6 649.8 L1323.2 663.2" fill="none" stroke="#BDA247" stroke-width="1.4"/><circle cx="1851.4" cy="656.3" r="10.7" fill="none" stroke="#9FB0BB" stroke-width="1.5"/><circle cx="1851.4" cy="650.5" r="1.5" fill="#9FB0BB"/><circle cx="1851.4" cy="656.3" r="1.5" fill="#9FB0BB"/><circle cx="1851.4" cy="662.1" r="1.5" fill="#9FB0BB"/><circle cx="1329.9" cy="703.5" r="15" fill="#FAE7CA"/><path d="M1323.2 696.8 L1336.6 710.2 M1336.6 696.8 L1323.2 710.2" fill="none" stroke="#BDA247" stroke-width="1.4"/><circle cx="1851.4" cy="703.3" r="10.7" fill="none" stroke="#9FB0BB" stroke-width="1.5"/><circle cx="1851.4" cy="697.5" r="1.5" fill="#9FB0BB"/><circle cx="1851.4" cy="703.3" r="1.5" fill="#9FB0BB"/><circle cx="1851.4" cy="709.1" r="1.5" fill="#9FB0BB"/><circle cx="1329.9" cy="750.5" r="15" fill="#FAE7CA"/><path d="M1323.2 743.8 L1336.6 757.2 M1336.6 743.8 L1323.2 757.2" fill="none" stroke="#BDA247" stroke-width="1.4"/><circle cx="1851.4" cy="750.3" r="10.7" fill="none" stroke="#9FB0BB" stroke-width="1.5"/><circle cx="1851.4" cy="744.5" r="1.5" fill="#9FB0BB"/><circle cx="1851.4" cy="750.3" r="1.5" fill="#9FB0BB"/><circle cx="1851.4" cy="756.1" r="1.5" fill="#9FB0BB"/><circle cx="1329.9" cy="797.5" r="15" fill="#FAE7CA"/><path d="M1323.2 790.8 L1336.6 804.2 M1336.6 790.8 L1323.2 804.2" fill="none" stroke="#BDA247" stroke-width="1.4"/><circle cx="1851.4" cy="797.3" r="10.7" fill="none" stroke="#9FB0BB" stroke-width="1.5"/><circle cx="1851.4" cy="791.5" r="1.5" fill="#9FB0BB"/><circle cx="1851.4" cy="797.3" r="1.5" fill="#9FB0BB"/><circle cx="1851.4" cy="803.1" r="1.5" fill="#9FB0BB"/><circle cx="1329.9" cy="844.5" r="15" fill="#FAE7CA"/><path d="M1323.2 837.8 L1336.6 851.2 M1336.6 837.8 L1323.2 851.2" fill="none" stroke="#BDA247" stroke-width="1.4"/><circle cx="1851.4" cy="844.3" r="10.7" fill="none" stroke="#9FB0BB" stroke-width="1.5"/><circle cx="1851.4" cy="838.5" r="1.5" fill="#9FB0BB"/><circle cx="1851.4" cy="844.3" r="1.5" fill="#9FB0BB"/><circle cx="1851.4" cy="850.1" r="1.5" fill="#9FB0BB"/></svg></div>
<div style="position:absolute;left:1880px;top:263.3px;width:8px;height:381px;background:#C8C8C8;border-radius:4px"></div>
<div class="t" style="left:105.30px;top:883.54px;font-size:18.5px;line-height:18.5px;color:#262D35;transform:scaleX(0.9286);">Showing 1 - 20/23</div>
<div class="t" style="left:1472.70px;top:883.04px;font-size:18.5px;line-height:18.5px;color:#262D35;transform:scaleX(0.8516);">Per Page</div>
<div style="position:absolute;left:1555px;top:876px;width:79px;height:34px;background:#fff;border:1px solid #E2E6EA;border-radius:6px;box-sizing:border-box"></div>
<div class="t" style="left:1565.90px;top:884.04px;font-size:18.5px;line-height:18.5px;color:#1F2630;transform:scaleX(0.9223);">20</div>
<svg style="position:absolute;left:1610px;top:880px;" width="30" height="25" viewBox="0 0 30 25"><path d="M9 10 L14.2 15.4 L19.4 10" fill="none" stroke="#1E2630" stroke-width="2.3" stroke-linecap="round" stroke-linejoin="round"/></svg>
<div style="position:absolute;left:1644px;top:873.5px;width:246px;height:37.5px;background:#fff;border:1px solid #DFE3E8;box-sizing:border-box"></div>
<div style="position:absolute;left:1645px;top:874.5px;width:91px;height:35.5px;background:#EEF2F6"></div>
<div style="position:absolute;left:1690px;top:874px;width:1px;height:37px;background:#DFE3E8"></div>
<div style="position:absolute;left:1736px;top:875.5px;width:30px;height:35px;background:#0766D1"></div>
<div style="position:absolute;left:1797px;top:874px;width:1px;height:37px;background:#DFE3E8"></div>
<div style="position:absolute;left:1843px;top:874px;width:1px;height:37px;background:#DFE3E8"></div>
<div class="t" style="left:1748.30px;top:884.04px;font-size:18.5px;line-height:18.5px;color:#FFFFFF;transform:scaleX(0.7864);">1</div>
<div class="t" style="left:1778.20px;top:884.04px;font-size:18.5px;line-height:18.5px;color:#1F2630;transform:scaleX(0.8544);">2</div>
<svg style="position:absolute;left:1640px;top:870px;" width="260" height="45" viewBox="0 0 260 45"><g fill="none" stroke="#A0B2BE" stroke-width="2.3" stroke-linecap="round" stroke-linejoin="round">
<path d="M26.8 13.8 L18.6 22.2 L26.8 30.6 M36.3 13.8 L28.1 22.2 L36.3 30.6"/>
<path d="M77.6 13.8 L69.4 22.2 L77.6 30.6"/>
<path d="M176.4 14 L184.6 22.2 L176.4 30.2"/>
<path d="M218 14 L226.2 22.2 L218 30.2 M227.6 14 L235.8 22.2 L227.6 30.2"/>
</g></svg>
</div></body></html>
